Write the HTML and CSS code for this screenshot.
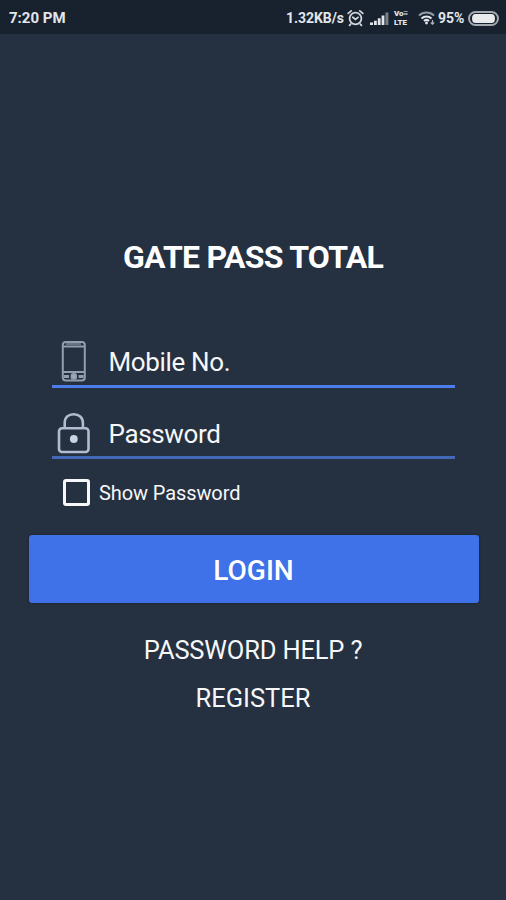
FILE: index.html
```html
<!DOCTYPE html>
<html lang="en">
<head>
<meta charset="utf-8">
<meta name="viewport" content="width=device-width, initial-scale=1">
<title>Gate Pass Total</title>
<link rel="stylesheet" href="styles.css">
</head>
<body>
<header class="status">
  <span class="clock">7:20 PM</span>
  <div class="indicators">
    <span class="speed">1.32KB/s</span>
    <svg class="alarm" width="17" height="18" viewBox="0 0 17 18" fill="none" stroke="#d3d7dc" stroke-width="1.8" stroke-linecap="round">
      <circle cx="8.5" cy="9.5" r="5.9"/>
      <path d="M1.2 4.4 4.2 1.9M15.8 4.4 12.8 1.9M3.6 15.2 2.6 16.4M13.4 15.2l1 1.2M5.8 8.2l2.7 2.2 2.5-2"/>
    </svg>
    <svg class="signal" width="19" height="13" viewBox="0 0 19 13" fill="#e3e6ea">
      <path d="M0 10.5h3V13H0zM4 8.7h2.8V13H4zM7.8 6.2h2.8V13H7.8zM11.6 3.4h2.8V13h-2.8z"/>
      <path d="M15.4.5h3V13h-3z" fill="#77808a"/>
    </svg>
    <span class="volte">Vo≡<br>LTE</span>
    <svg class="wifi" width="18" height="14" viewBox="0 0 18 14" fill="none" stroke-width="2">
      <path d="M1 4.6C5.2.6 11.8.6 16 4.6" stroke="#929ba5"/>
      <path d="M3.5 7.4c2.900-2.700 7.100-2.700 10 0M6 10c1.500-1.400 3.500-1.400 5 0" stroke="#e3e6ea"/>
      <circle cx="8.500" cy="12" r="1.400" fill="#e3e6ea"/>
      <path d="M14.500 9v4M12.800 11.500l1.700 1.700 1.700-1.700" stroke="#aab1ba" stroke-width="1.200"/>
    </svg>
    <span class="percent">95%</span>
    <span class="battery"></span>
  </div>
</header>
<main>
  <h1>GATE PASS TOTAL</h1>
  <form class="form">
    <div class="field mobile">
      <svg class="icon" width="44" height="45" viewBox="0 0 44 45" fill="none" stroke="#929eae" stroke-width="2">
        <rect x="10.800" y="4" width="22" height="38.600" rx="3"/>
        <path d="M10.800 8.400h22M10.800 34h22"/>
        <path d="M14 6h15" stroke-width="1.600" stroke="#78859a"/>
        <path d="M12 38.400h5M26.600 38.400h5" stroke-width="3"/>
        <rect x="19.600" y="36" width="4.400" height="4.800" rx="1.500" fill="#a3adbb"/>
      </svg>
      <span class="label">Mobile No.</span>
    </div>
    <div class="field password">
      <svg class="icon" width="44" height="42" viewBox="0 0 44 42" fill="none" stroke="#b0bccf" stroke-width="2.600">
        <rect x="7" y="16.300" width="29.500" height="23.700" rx="3"/>
        <path d="M12.700 16.300V11C12.700 5.500 16.500 2.200 21.700 2.200S30.900 5.500 30.900 11v5.300"/>
        <circle cx="21.800" cy="27" r="3.900" fill="#c8d4e6" stroke="none"/>
      </svg>
      <span class="label">Password</span>
    </div>
    <label class="show"><span class="box"></span><span class="show-text">Show Password</span></label>
  </form>
  <div class="login"><span>LOGIN</span></div>
  <nav class="links">
    <span class="help">PASSWORD HELP ?</span>
    <span class="register">REGISTER</span>
  </nav>
</main>
</body>
</html>
```

FILE: styles.css
```css
* { box-sizing: border-box; }
html { background: #253040; }
body {
  margin: 0;
  height: 900px;
  background: #253040;
  color: #f6f7f9;
  font-family: Roboto, "Liberation Sans", sans-serif;
  white-space: nowrap;
  overflow: hidden;
}
.status {
  display: flex;
  align-items: center;
  justify-content: space-between;
  height: 34px;
  padding: 2px 7px 0 9px;
  background: #18222f;
  color: #e3e6ea;
  font-size: 14px;
  font-weight: 700;
  line-height: 20px;
}
.clock { font-size: 15px; }
.indicators { display: flex; align-items: center; }
.speed { width: 57px; letter-spacing: -0.05px; }
.alarm { margin-left: 4px; }
.signal { margin-left: 6px; }
.volte {
  width: 17px;
  margin-left: 5px;
  font-size: 8px;
  font-weight: 900;
  line-height: 9px;
}
.wifi { margin-left: 7px; }
.percent { width: 26px; margin-left: 2px; }
.battery {
  width: 31px;
  height: 15px;
  margin-left: 4px;
  border: 2px solid #a4a9b0;
  border-radius: 8px;
  background: #e8eaec content-box;
  padding: 1px 2px;
}
main { display: flex; flex-direction: column; }
h1 {
  margin: 203px 0 0;
  font-size: 32px;
  font-weight: 700;
  letter-spacing: -0.7px;
  line-height: 40px;
  text-align: center;
  color: #fff;
}
.form { width: 403px; margin: 61px 0 0 52px; }
.field { display: flex; }
.mobile { height: 49.5px; border-bottom: 3px solid #4d7cec; }
.password { height: 71.5px; padding-top: 24px; border-bottom: 3px solid #4469b9; }
.label { margin-left: 12.5px; font-size: 26px; letter-spacing: -0.35px; line-height: 48px; }
.password .label { line-height: 45px; }
.show { display: flex; align-items: center; margin: 20px 0 0 11px; height: 27px; }
.box { width: 27px; height: 27px; border: 3px solid #f6f7f9; border-radius: 3px; }
.show-text { margin-left: 9px; font-size: 20px; letter-spacing: -0.1px; }
.login {
  display: flex;
  align-items: center;
  justify-content: center;
  width: 450px;
  height: 68px;
  margin: 29px 0 0 28.5px;
  padding-top: 2px;
  border-radius: 3px;
  background: #3f71e8;
  box-shadow: 0 0 2px #182019;
  color: #fff;
  font-size: 28px;
  font-weight: 500;
}
.links {
  display: flex;
  flex-direction: column;
  align-items: center;
  margin-top: 23px;
  font-size: 25.5px;
  line-height: 48px;
}
.help { letter-spacing: -0.17px; }
```
